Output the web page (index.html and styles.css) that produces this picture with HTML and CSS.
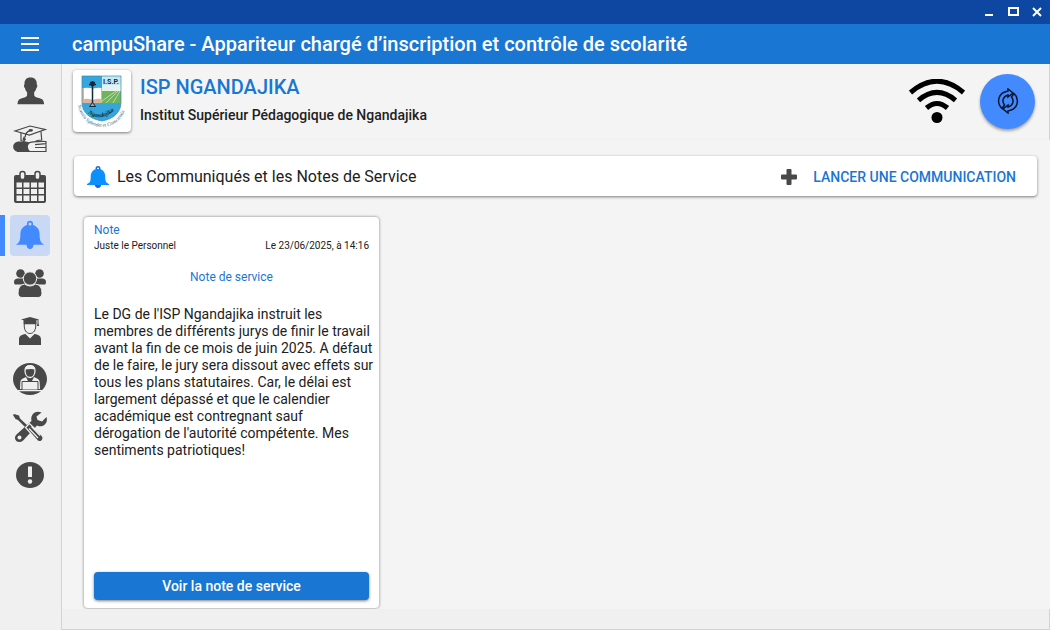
FILE: index.html
```
<!DOCTYPE html>
<html lang="fr">
	<head>
		<meta charset="utf-8">
		<title>campuShare</title>
		<link rel="stylesheet" href="styles.css">
	</head>
	<body>
		<div class="window">
			<div class="titlebar">
				<button class="win-btn" aria-label="Réduire"><svg width="12" height="12"><path d="M2 8h8v2H2z" fill="#fff"/></svg></button>
				<button class="win-btn" aria-label="Agrandir"><svg width="12" height="12"><path d="M2 2h9v7H2z" fill="none" stroke="#fff" stroke-width="2"/></svg></button>
				<button class="win-btn" aria-label="Fermer"><svg width="12" height="12"><path d="M2 2l8 8M10 2l-8 8" stroke="#fff" stroke-width="2"/></svg></button>
			</div>
			<header class="appbar">
				<button class="menu-btn" aria-label="Menu"><svg width="18" height="14"><path d="M0 0h18v2H0zM0 6h18v2H0zM0 12h18v2H0z" fill="#fff"/></svg></button>
				<h1 class="app-title">campuShare - Appariteur chargé d’inscription et contrôle de scolarité</h1>
			</header>
			<div class="layout">
				<nav class="sidebar">
					<button class="nav-item" aria-label="Profil">
						<svg class="nav-icon" viewBox="0 0 34 35"><path d="M17.500 3.500c4.500 0 6.500 2.700 6.300 7 .8.300.8 2.800-.4 3.400-.4 2-1.200 3.200-2.200 4.200v3.300c.6 1.700 3 2 5.600 2.900 3 1 4 2.300 4.300 5.900H4.500c.3-3.600 1.300-4.900 4.300-5.900 2.600-.9 4.600-1.200 5.300-2.900v-3.300c-1-1-1.800-2.200-2.200-4.200-1.200-.6-1.200-3.100-.4-3.400-.2-4.300 1.500-7 6-7z"/></svg>
					</button>
					<button class="nav-item" aria-label="Scolarité">
						<svg class="nav-icon" viewBox="0 0 34 35">
							<path d="M2 9L16.500 13 32 7.500 17 4z" fill="none" stroke="#484848" stroke-width="1.200"/>
							<path d="M8 11v7.500q3 1.500 7 2M28 9.500l.7 8.500q-3 0-6 1" fill="none" stroke="#484848" stroke-width="1.200"/>
							<path d="M17.500 8.500q-5 1-5.500 7" fill="none" stroke="#484848" stroke-width="1.300"/>
							<ellipse cx="17.800" cy="8.300" rx="2.200" ry="1.400"/>
							<path d="M11 14l2 3.500-1.800 2-1.700-2z"/>
							<path d="M5 19.500q8-.5 12 1.500c-3 2-3 6 1 9H5c-6.500-1.500-6.500-9 0-10.500z"/>
							<path d="M15 21q5-2 18-1.500v2.200l-11 1M33 22v7.500H4M22 25.500h11" fill="none" stroke="#484848" stroke-width="1.200"/>
						</svg>
					</button>
					<button class="nav-item" aria-label="Calendrier">
						<svg class="nav-icon" viewBox="0 0 34 35">
							<path fill-rule="evenodd" d="M3 5h28q2 0 2 2v24q0 2-2 2H3q-2 0-2-2V7q0-2 2-2zM3.500 12.500v5H9v-5zM10.500 12.500v5h6v-5zM18 12.500v5h6v-5zM25.500 12.500v5H31v-5zM3.500 19v5H9v-5zM10.500 19v5h6v-5zM18 19v5h6v-5zM25.500 19v5H31v-5zM3.500 25.500V31H9v-5.500zM10.500 25.500V31h6v-5.500zM18 25.500V31h6v-5.500zM25.500 25.500V31H31v-5.500z"/>
							<rect x="7" y="1.500" width="5" height="8" rx="2.300" fill="#f0f0f0" stroke="#484848" stroke-width="1.500"/>
							<rect x="22" y="1.500" width="5" height="8" rx="2.300" fill="#f0f0f0" stroke="#484848" stroke-width="1.500"/>
						</svg>
					</button>
					<button class="nav-item active" aria-label="Communiqués">
						<svg class="nav-icon" viewBox="0 0 34 35"><path fill-rule="evenodd" d="M17 2.800a3 3 0 0 1 3 3v1.100c4.500 1.400 6.600 4.900 6.600 9.500 0 6 1.200 8.300 4.600 10.300H20.500c-.2 2.800-1.500 4.300-3.500 4.300s-3.300-1.500-3.500-4.300H2.800c3.400-2 4.600-4.300 4.600-10.300 0-4.600 2.100-8.100 6.600-9.500V5.800a3 3 0 0 1 3-3zM17 4.500a1.500 1.500 0 0 0 0 3 1.500 1.500 0 0 0 0-3z"/></svg>
					</button>
					<button class="nav-item" aria-label="Personnel">
						<svg class="nav-icon" viewBox="0 0 34 35">
							<circle cx="7.500" cy="7.500" r="4.300"/><circle cx="26.500" cy="7.500" r="4.300"/>
							<path d="M5 12.500h7v6H2q-1-.5-1-2.500 0-3.500 4-3.500zM29 12.500h-7v6h10q1-.5 1-2.500 0-3.500-4-3.500z"/>
							<g stroke="#f0f0f0" stroke-width="1"><circle cx="17" cy="12.500" r="6.700"/>
							<path d="M11.500 18q5.500 4 11 0 6.500 1 6.500 9 0 4.500-4.500 4.500h-15Q5 31.500 5 27q0-8 6.500-9z"/></g>
						</svg>
					</button>
					<button class="nav-item" aria-label="Étudiants">
						<svg class="nav-icon" viewBox="0 0 34 35">
							<path d="M17 3l9 2.500-2.500.8v4h-13v-4L8 5.500z"/>
							<path d="M25 5.500v5" stroke="#484848"/><path d="M25 9l1.300 3h-2.600z"/>
							<path d="M11.300 10c-.5 6 2 9.500 5.700 9.500s6.200-3.500 5.700-9.500" fill="none" stroke="#484848" stroke-width="1"/>
							<path d="M12.500 20l4.500 4.500 4.500-4.500c4.500.8 6.500 2 6.500 5.500V31H6v-5.500c0-3.500 2-4.700 6.500-5.500z"/>
						</svg>
					</button>
					<button class="nav-item" aria-label="Enseignants">
						<svg class="nav-icon" viewBox="0 0 34 35">
							<ellipse cx="17" cy="17" rx="17" ry="16"/>
							<path d="M12 8.500c0-6.500 10-6.500 10 0 0 4-2 7-5 7s-5-3-5-7z" fill="none" stroke="#f0f0f0" stroke-width="1.300"/>
							<path d="M12 7.500c0-6 10-6 10 0L18 7z" fill="#f0f0f0"/>
							<path d="M13 15l4 8 4-8 4 2q1.500 1 1.700 3L27 27H7l.3-7q.2-2 1.700-3z" fill="#f0f0f0"/>
							<path d="M15.500 18h3l-1.500 4z"/>
							<path d="M9 19.500h16v8.500H9z" fill="#f0f0f0" stroke="#484848"/>
							<path d="M5 28.700h24" stroke="#f0f0f0" stroke-width="1.300"/>
						</svg>
					</button>
					<button class="nav-item" aria-label="Outils">
						<svg class="nav-icon" viewBox="0 0 34 35">
							<path d="M1 4l5 1.500 1 3L15 16l-2 2L5 10 2.500 9 0 5z"/>
							<path d="M28.500 2.500C22-.5 17 5 18.500 11L4 24c-4 3.500-1.500 8 2.500 8 2.500 0 4-1.500 5-3L24 15.500c6 3 11.500-2.500 9.500-8.500L29 11.500 24.500 10l-1-3.500z"/>
							<circle cx="6.500" cy="27.500" r="2" fill="#f0f0f0"/>
							<path d="M12.500 17.500l4-4 12.500 12c3 3.500-1.500 8.500-5 5z" stroke="#f0f0f0" stroke-width="1.200"/>
							<path d="M16 18.500l9 9.500M18.500 16.500l8.500 9" stroke="#f0f0f0" stroke-width="1.200"/>
						</svg>
					</button>
					<button class="nav-item" aria-label="À propos">
						<svg class="nav-icon" viewBox="0 0 34 35"><ellipse cx="17" cy="17" rx="14" ry="13"/><path d="M15 8.500h4V19h-4z" fill="#f0f0f0"/><circle cx="17" cy="23.500" r="2.200" fill="#f0f0f0"/></svg>
					</button>
				</nav>
				<main class="content">
					<section class="school">
						<div class="logo-card">
							<svg class="logo" viewBox="0 0 48 54" role="img" aria-label="ISP Ngandajika">
								<defs>
									<clipPath id="shield"><path d="M4 2h39v26c0 11-8 17-19 19C12 45 4 39 4 28z"/></clipPath>
									<path id="motto" d="M0 31C4 60 44 60 48 31"/>
									<path id="place" d="M10 39Q24 50 40 33"/>
								</defs>
								<g clip-path="url(#shield)">
									<path d="M0 0h48v54H0z" fill="#35a7dd"/>
									<path d="M4 14h20v15H4z" fill="#d9b69b"/>
									<path d="M6 14q5-1 9 1 5-2 8-1v11q-4-1-8 1-5-2-9-1z" fill="#fff"/>
									<path d="M24 2h20v9H24z" fill="#c4e8f3"/>
									<path d="M24 11h20v6H24z" fill="#e6f2ee"/>
									<path d="M24 17h20v12H24z" fill="#6fb35d"/>
									<path d="M24 27l14-10M28 29l12-12M35 29l7-12" stroke="#b6dda5"/>
								</g>
								<path d="M4 2h39v26c0 11-8 17-19 19C12 45 4 39 4 28z" fill="none" stroke="#3986aa" stroke-width=".7"/>
								<path d="M14.500 7v25M11 10.500h7M12 8.500h5" stroke="#102b3f" stroke-width="1.500"/>
								<circle cx="14.500" cy="10" r="2.300" fill="#102b3f"/>
								<path d="M11.500 32.500l3-4 3 4z" fill="#bfa58d" stroke="#102b3f"/>
								<text x="25" y="10" class="logo-isp">I.S.P.</text>
								<text class="logo-place"><textPath href="#place">Ngandajika</textPath></text>
								<text class="logo-motto"><textPath href="#motto">Scientia Splendet et Conscientia</textPath></text>
							</svg>
						</div>
						<div class="school-text">
							<h2 class="school-name">ISP NGANDAJIKA</h2>
							<p class="school-desc">Institut Supérieur Pédagogique de Ngandajika</p>
						</div>
						<svg class="wifi" viewBox="0 0 56 44" role="img" aria-label="Connecté">
							<path d="M1.500 13.500Q28-9 54.500 13.500M9.500 21.300Q28 5.500 46.500 21.300M17.500 29Q28 20 38.500 29" fill="none" stroke="#000" stroke-width="5"/>
							<circle cx="28" cy="38.500" r="5.500"/>
						</svg>
						<button class="sync-btn" aria-label="Actualiser">
							<svg width="22" height="26" viewBox="0 0 22 26" fill="none" stroke="#071633" stroke-width="1.500">
								<path d="M5 20.500C0 16 .5 8 6.500 4.500L11 3V1l5 4-5 4V7C6 8.500 4.500 13 7.500 17zM17 5.500c5 4.500 4.500 12.500-1.500 16L11 23v2l-5-4 5-4v2c5-1.500 6.500-6 3.500-10z"/>
							</svg>
						</button>
					</section>
					<section class="news">
						<div class="news-bar">
							<svg class="news-bell" viewBox="0 0 22 22">
								<path fill="#1769d2" d="M11 0a2.500 2.500 0 0 1 2.500 2.500V4h-5V2.500A2.500 2.500 0 0 1 11 0zM7.500 18h7c0 2-1.500 4-3.500 4s-3.500-2-3.500-4z"/>
								<circle cx="11" cy="2.500" r="1" fill="#fff"/>
								<path fill="#0b91ff" d="M11 3c5 0 7.300 3.500 7.300 8 0 4 .7 6 3.700 7v1H0v-1c3-1 3.700-3 3.700-7 0-4.500 2.300-8 7.300-8z"/>
							</svg>
							<h2 class="news-title">Les Communiqués et les Notes de Service</h2>
							<button class="new-btn">
								<svg width="16" height="16" viewBox="0 0 16 16"><path d="M6.500 0h3q1 0 1 1v4.500H15q1 0 1 1v3q0 1-1 1h-4.500V15q0 1-1 1h-3q-1 0-1-1v-4.500H1q-1 0-1-1v-3q0-1 1-1h4.500V1q0-1 1-1z" fill="#484848"/></svg>
								LANCER UNE COMMUNICATION
							</button>
						</div>
						<div class="notes">
							<article class="note">
								<h3 class="note-type">Note</h3>
								<div class="note-meta">
									<span>Juste le Personnel</span>
									<span>Le 23/06/2025, à 14:16</span>
								</div>
								<h4 class="note-title">Note de service</h4>
								<p class="note-text">Le DG de l'ISP Ngandajika instruit les<br>
								membres de différents jurys de finir le travail<br>
								avant la fin de ce mois de juin 2025. A défaut<br>
								de le faire, le jury sera dissout avec effets sur<br>
								tous les plans statutaires. Car, le délai est<br>
								largement dépassé et que le calendier<br>
								académique est contregnant sauf<br>
								dérogation de l'autorité compétente. Mes<br>
								sentiments patriotiques!</p>
								<button class="note-btn">Voir la note de service</button>
							</article>
						</div>
					</section>
					<footer class="statusbar"></footer>
				</main>
			</div>
		</div>
	</body>
</html>
```
FILE: styles.css
```
*{
	margin:0;
	padding:0;
	box-sizing:border-box;
}
body{
	font-family:Roboto, "Liberation Sans", sans-serif;
	color:#212121;
	background-color:#f0f0f0;
}
button{
	font-family:inherit;
	border:none;
	background:none;
	cursor:pointer;
}
svg{
	display:block;
}
.window{
	min-height:100vh;
	display:flex;
	flex-direction:column;
}
.titlebar{
	height:24px;
	display:flex;
	justify-content:flex-end;
	align-items:center;
	gap:12px;
	padding:0 7px;
	background-color:#0d47a1;
}
.appbar{
	height:40px;
	display:flex;
	align-items:center;
	gap:33px;
	padding-left:21px;
	background-color:#1976d2;
}
.app-title{
	font-size:20px;
	font-weight:500;
	color:#fff;
}
.layout{
	flex:1;
	display:flex;
}

/* sidebar */
.sidebar{
	width:62px;
	display:flex;
	flex-direction:column;
	gap:7px;
	padding-top:7px;
	border-right:1px solid #d3d3d3;
}
.nav-item{
	height:41px;
	margin:0 11px 0 0;
	padding-left:5px;
	border-left:5px solid transparent;
	display:flex;
}
.nav-icon{
	width:40px;
	height:41px;
	padding:3px;
	border-radius:4px;
	fill:#484848;
}
.active{
	border-left-color:#448aff;
}
.active .nav-icon{
	background-color:#c9d8f5;
	fill:#448aff;
}

/* school header */
.content{
	flex:1;
	display:flex;
	flex-direction:column;
	background-color:#f4f4f4;
}
.school{
	height:77px;
	display:flex;
	align-items:center;
	padding:0 14px 0 11px;
	border-right:1px solid #d3d3d3;
	border-bottom:3px solid #f2f2f2;
}
.logo-card{
	width:58px;
	height:62px;
	padding:4px 5px;
	background-color:#fff;
	border-radius:4px;
	box-shadow:0 1px 3px rgba(0,0,0,.5);
}
.logo{
	width:48px;
	height:54px;
	overflow:visible;
}
.logo-isp{
	font-size:7px;
	font-weight:bold;
	fill:#102b3f;
}
.logo-place{
	font-size:6px;
	font-weight:bold;
	font-style:italic;
	font-family:"Liberation Serif", serif;
	fill:#102b3f;
}
.logo-motto{
	font-size:5px;
	font-family:"Liberation Serif", serif;
	fill:#2d5f8c;
}
.school-text{
	flex:1;
	padding-left:9px;
}
.school-name{
	font-size:20px;
	line-height:28px;
	font-weight:500;
	color:#1976d2;
}
.school-desc{
	font-size:14px;
	line-height:28px;
	font-weight:500;
}
.wifi{
	width:56px;
	height:44px;
	margin-right:15px;
}
.sync-btn{
	width:55px;
	height:55px;
	display:flex;
	align-items:center;
	justify-content:center;
	border-radius:50%;
	background-color:#448aff;
	box-shadow:0 2px 3px rgba(0,0,0,.35);
}

/* news */
.news{
	flex:1;
	display:flex;
	flex-direction:column;
	padding:15px 13px 1px 12px;
}
.news-bar{
	height:40px;
	display:flex;
	align-items:center;
	padding:1px 21px 0 13px;
	background-color:#fff;
	border-radius:4px;
	box-shadow:0 1px 3px rgba(0,0,0,.5);
}
.news-bell{
	width:22px;
	height:22px;
}
.news-title{
	flex:1;
	padding-left:8px;
	font-size:16px;
	font-weight:400;
}
.new-btn{
	display:flex;
	align-items:center;
	gap:16px;
	font-size:14px;
	font-weight:500;
	color:#1976d2;
}
.notes{
	flex:1;
	display:flex;
	padding:21px 10px 0;
}
.note{
	width:295px;
	display:flex;
	flex-direction:column;
	padding:5px 10px 8px;
	background-color:#fff;
	border-radius:4px;
	box-shadow:0 0 3px rgba(0,0,0,.5);
}
.note-type{
	font-size:12px;
	line-height:16px;
	font-weight:400;
	color:#1976d2;
}
.note-meta{
	display:flex;
	justify-content:space-between;
	font-size:10px;
	line-height:16px;
}
.note-title{
	padding:15px 0 21px;
	font-size:12px;
	line-height:16px;
	font-weight:400;
	text-align:center;
	color:#1976d2;
}
.note-text{
	flex:1;
	font-size:14px;
	line-height:17px;
	white-space:nowrap;
}
.note-btn{
	height:28px;
	font-size:14px;
	font-weight:500;
	color:#fff;
	background-color:#1976d2;
	border-radius:4px;
	box-shadow:0 1px 3px rgba(0,0,0,.5);
}
.statusbar{
	height:21px;
	background-color:#f0f0f0;
	border-right:1px solid #d3d3d3;
	border-bottom:1px solid #d3d3d3;
}
```
